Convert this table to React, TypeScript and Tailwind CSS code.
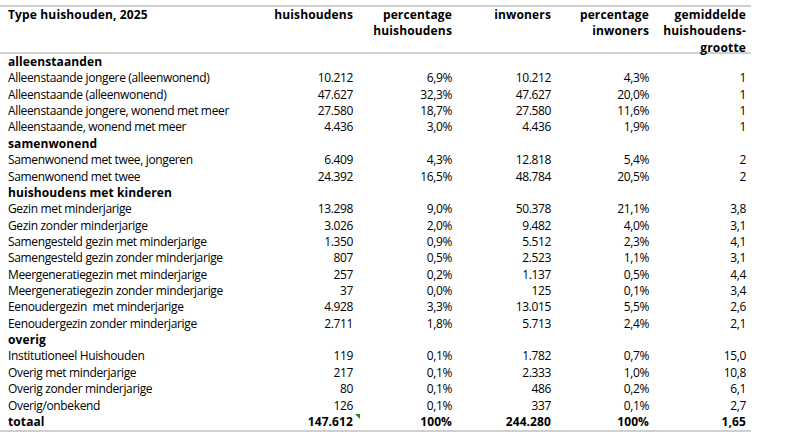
import React from 'react';

type Row = { label: string; values?: string[]; kind?: 'section' | 'total' };

const rows: Row[] = [
  { label: 'alleenstaanden', kind: 'section' },
  { label: 'Alleenstaande jongere (alleenwonend)', values: ['10.212', '6,9%', '10.212', '4,3%', '1'] },
  { label: 'Alleenstaande (alleenwonend)', values: ['47.627', '32,3%', '47.627', '20,0%', '1'] },
  { label: 'Alleenstaande jongere, wonend met meer', values: ['27.580', '18,7%', '27.580', '11,6%', '1'] },
  { label: 'Alleenstaande, wonend met meer', values: ['4.436', '3,0%', '4.436', '1,9%', '1'] },
  { label: 'samenwonend', kind: 'section' },
  { label: 'Samenwonend met twee, jongeren', values: ['6.409', '4,3%', '12.818', '5,4%', '2'] },
  { label: 'Samenwonend met twee', values: ['24.392', '16,5%', '48.784', '20,5%', '2'] },
  { label: 'huishoudens met kinderen', kind: 'section' },
  { label: 'Gezin met minderjarige', values: ['13.298', '9,0%', '50.378', '21,1%', '3,8'] },
  { label: 'Gezin zonder minderjarige', values: ['3.026', '2,0%', '9.482', '4,0%', '3,1'] },
  { label: 'Samengesteld gezin met minderjarige', values: ['1.350', '0,9%', '5.512', '2,3%', '4,1'] },
  { label: 'Samengesteld gezin zonder minderjarige', values: ['807', '0,5%', '2.523', '1,1%', '3,1'] },
  { label: 'Meergeneratiegezin met minderjarige', values: ['257', '0,2%', '1.137', '0,5%', '4,4'] },
  { label: 'Meergeneratiegezin zonder minderjarige', values: ['37', '0,0%', '125', '0,1%', '3,4'] },
  { label: 'Eenoudergezin  met minderjarige', values: ['4.928', '3,3%', '13.015', '5,5%', '2,6'] },
  { label: 'Eenoudergezin zonder minderjarige', values: ['2.711', '1,8%', '5.713', '2,4%', '2,1'] },
  { label: 'overig', kind: 'section' },
  { label: 'Institutioneel Huishouden', values: ['119', '0,1%', '1.782', '0,7%', '15,0'] },
  { label: 'Overig met minderjarige', values: ['217', '0,1%', '2.333', '1,0%', '10,8'] },
  { label: 'Overig zonder minderjarige', values: ['80', '0,1%', '486', '0,2%', '6,1'] },
  { label: 'Overig/onbekend', values: ['126', '0,1%', '337', '0,1%', '2,7'] },
  { label: 'totaal', values: ['147.612', '100%', '244.280', '100%', '1,65'], kind: 'total' },
];

const headers = [
  ['huishoudens'],
  ['percentage', 'huishoudens'],
  ['inwoners'],
  ['percentage', 'inwoners'],
  ['gemiddelde', 'huishoudens-', 'grootte'],
];

const cols = 'grid grid-cols-[258px_100px_99px_99px_98px_97px]';

export default function App() {
  return (
    <div className="w-[800px] h-[438px] bg-white pt-[5px] text-[12px] leading-[16.36px] text-black font-['Open_Sans',sans-serif]">
      <div className="w-[751px] border-y-2 border-[#cfcfcf]">
        {/* header */}
        <div className={`${cols} h-[47px] border-b-2 border-[#cfcfcf] font-bold tracking-[0.15px]`}>
          <div className="pl-2">Type huishouden, 2025</div>
          {headers.map((lines, i) => (
            <div key={i} className="pr-[5px] text-right">
              {lines.map((l) => (
                <div key={l}>{l}</div>
              ))}
            </div>
          ))}
        </div>

        {/* body */}
        {rows.map((r, i) => (
          <div
            key={i}
            className={`${cols} h-[16.36px] ${r.kind ? 'font-bold tracking-[0.1px]' : 'tracking-[-0.35px]'}`}
          >
            <div className="pl-2 whitespace-pre">{r.label}</div>
            {r.values?.map((v, j) => (
              <div key={j} className="relative pr-[5px] text-right">
                {v}
                {r.kind === 'total' && j === 0 && (
                  <span className="absolute -right-[2px] top-0 w-0 h-0 border-t-[5px] border-l-[5px] border-t-[#1f8a1f] border-l-transparent" />
                )}
              </div>
            ))}
          </div>
        ))}
      </div>
    </div>
  );
}
